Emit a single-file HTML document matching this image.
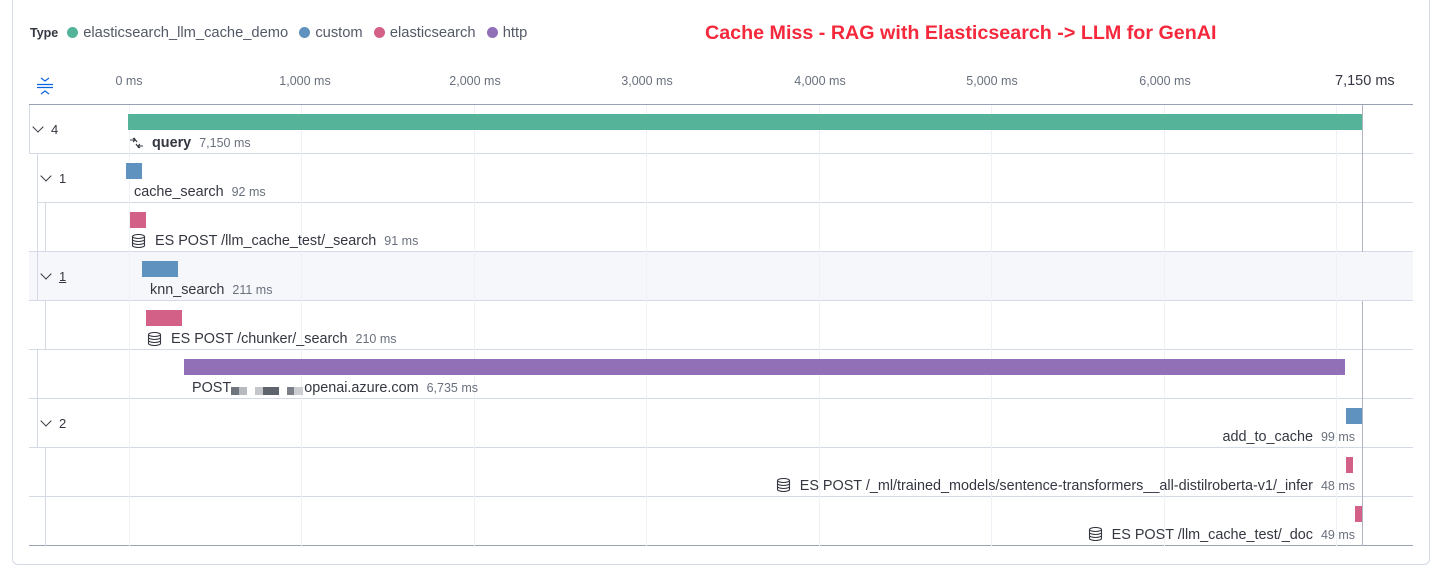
<!DOCTYPE html>
<html><head><meta charset="utf-8"><style>
*{margin:0;padding:0;box-sizing:border-box}
body{width:1440px;height:568px;background:#fff;font-family:"Liberation Sans",sans-serif;color:#343741;position:relative;overflow:hidden}
.abs{position:absolute}
.panel{left:12px;top:-10px;width:1418px;height:575px;border:1px solid #d3dae6;border-radius:6px}
.leg{top:25px;font-size:14.7px;color:#535966;white-space:nowrap}
.dot{display:inline-block;width:11px;height:11px;border-radius:50%;vertical-align:-1px;margin-right:5px;margin-left:3px}
.tick{top:74px;font-size:12.5px;color:#69707d;transform:translateX(-50%);white-space:nowrap}
.grid{top:105px;width:1px;height:441px;background:#eef1f6}
.row{height:49px;border-bottom:1px solid #d3dae6;right:27px}
.bar{height:16px}
.lbl{font-size:14.4px;white-space:nowrap;color:#343741}
.lbl small{font-size:12.5px;color:#69707d;margin-left:8px}
.tog{font-size:13px;color:#343741}
.chev{display:inline-block;width:8px;height:8px;border-right:1.5px solid #343741;border-bottom:1.5px solid #343741;transform:rotate(45deg);margin-right:9px;position:relative;top:-3px}
</style></head><body>
<div class="abs panel"></div>
<div class="abs leg" style="left:30px"><b style="color:#343741;font-size:12.5px;margin-right:6px">Type</b><span class="dot" style="background:#54b399"></span>elasticsearch_llm_cache_demo&nbsp; <span class="dot" style="background:#6092c0"></span>custom&nbsp; <span class="dot" style="background:#d36086"></span>elasticsearch&nbsp; <span class="dot" style="background:#9170b8"></span>http</div>
<div class="abs" style="left:705px;top:22px;font-size:19.7px;font-weight:bold;color:#f5283c;white-space:nowrap">Cache Miss - RAG with Elasticsearch -&gt; LLM for GenAI</div>

<svg class="abs" style="left:36px;top:76px" width="18" height="20" viewBox="0 0 18 20"><path d="M5 2l4 3 4-3M1 8.5h16M1 11.5h16M5 18l4-3 4 3" fill="none" stroke="#0b64dd" stroke-width="1.2"/></svg>
<div class="abs tick" style="left:129px">0 ms</div>
<div class="abs tick" style="left:305px">1,000 ms</div>
<div class="abs tick" style="left:475px">2,000 ms</div>
<div class="abs tick" style="left:647px">3,000 ms</div>
<div class="abs tick" style="left:820px">4,000 ms</div>
<div class="abs tick" style="left:992px">5,000 ms</div>
<div class="abs tick" style="left:1165px">6,000 ms</div>
<div class="abs" style="left:1335px;top:73px;font-size:14.5px;color:#343741">7,150 ms</div>

<div class="abs" style="left:29px;top:104px;width:1384px;height:1px;background:#98a2b3"></div>
<div class="abs row" style="left:29px;top:105px;width:1384px;border-left:1px solid #d3dae6"></div>
<div class="abs row" style="left:37px;top:154px;width:1376px;border-left:1px solid #d3dae6"></div>
<div class="abs row" style="left:29px;top:203px;width:1384px"></div>
<div class="abs" style="left:45px;top:203px;width:1px;height:49px;background:#d3dae6"></div>
<div class="abs" style="left:37px;top:203px;width:1px;height:49px;background:#d3dae6"></div>
<div class="abs row" style="left:29px;top:252px;width:1384px;background:#f5f7fa"></div>
<div class="abs" style="left:37px;top:252px;width:1px;height:49px;background:#d3dae6"></div>
<div class="abs row" style="left:29px;top:301px;width:1384px"></div>
<div class="abs" style="left:45px;top:301px;width:1px;height:49px;background:#d3dae6"></div>
<div class="abs row" style="left:29px;top:350px;width:1384px"></div>
<div class="abs" style="left:37px;top:350px;width:1px;height:49px;background:#d3dae6"></div>
<div class="abs row" style="left:29px;top:399px;width:1384px"></div>
<div class="abs" style="left:37px;top:399px;width:1px;height:49px;background:#d3dae6"></div>
<div class="abs row" style="left:29px;top:448px;width:1384px"></div>
<div class="abs" style="left:45px;top:448px;width:1px;height:49px;background:#d3dae6"></div>
<div class="abs row" style="left:29px;top:497px;width:1384px;border-bottom-color:#98a2b3"></div>
<div class="abs" style="left:45px;top:497px;width:1px;height:49px;background:#d3dae6"></div>

<div class="abs grid" style="left:129px"></div>
<div class="abs grid" style="left:301px"></div>
<div class="abs grid" style="left:474px"></div>
<div class="abs grid" style="left:646px"></div>
<div class="abs grid" style="left:819px"></div>
<div class="abs grid" style="left:991px"></div>
<div class="abs grid" style="left:1164px"></div>
<div class="abs grid" style="left:1336px"></div>
<div class="abs" style="left:1362px;top:105px;width:1px;height:147px;background:#b0b6c0"></div>
<div class="abs" style="left:1362px;top:301px;width:1px;height:245px;background:#b0b6c0"></div>

<div class="abs tog" style="left:34px;top:122px"><span class="chev"></span>4</div>
<div class="abs tog" style="left:42px;top:171px"><span class="chev"></span>1</div>
<div class="abs tog" style="left:42px;top:269px"><span class="chev"></span><u>1</u></div>
<div class="abs tog" style="left:42px;top:416px"><span class="chev"></span>2</div>

<div class="abs bar" style="left:128px;top:114px;width:1234px;background:#54b399"></div>
<div class="abs bar" style="left:126px;top:163px;width:16px;background:#6092c0"></div>
<div class="abs bar" style="left:130px;top:212px;width:16px;background:#d36086"></div>
<div class="abs bar" style="left:142px;top:261px;width:36px;background:#6092c0"></div>
<div class="abs bar" style="left:146px;top:310px;width:36px;background:#d36086"></div>
<div class="abs bar" style="left:184px;top:359px;width:1161px;background:#9170b8"></div>
<div class="abs bar" style="left:1346px;top:408px;width:16px;background:#6092c0"></div>
<div class="abs bar" style="left:1346px;top:457px;width:7px;background:#d36086"></div>
<div class="abs bar" style="left:1355px;top:506px;width:7px;background:#d36086"></div>

<svg class="abs" style="left:129px;top:137px" width="15" height="13" viewBox="0 0 15 13"><path d="M1 3h5M4 1l2 2-2 2M5 1l3 4M14 9H9M11 7l-2 2 2 2M10 11l-3-4" fill="none" stroke="#343741" stroke-width="1.1"/></svg>
<div class="abs lbl" style="left:152px;top:135px"><b>query</b><small>7,150 ms</small></div>
<div class="abs lbl" style="left:134px;top:184px">cache_search<small>92 ms</small></div>
<svg class="abs" style="left:131px;top:234px" width="15" height="14" viewBox="0 0 15 14"><g fill="none" stroke="#343741" stroke-width="1.1"><ellipse cx="7.5" cy="2.5" rx="6" ry="2"/><path d="M1.5 2.5v9c0 1.1 2.7 2 6 2s6-.9 6-2v-9M1.5 5.5c0 1.1 2.7 2 6 2s6-.9 6-2M1.5 8.5c0 1.1 2.7 2 6 2s6-.9 6-2"/></g></svg>
<div class="abs lbl" style="left:155px;top:233px">ES POST /llm_cache_test/_search<small>91 ms</small></div>
<div class="abs lbl" style="left:150px;top:282px">knn_search<small>211 ms</small></div>
<svg class="abs" style="left:147px;top:332px" width="15" height="14" viewBox="0 0 15 14"><g fill="none" stroke="#343741" stroke-width="1.1"><ellipse cx="7.5" cy="2.5" rx="6" ry="2"/><path d="M1.5 2.5v9c0 1.1 2.7 2 6 2s6-.9 6-2v-9M1.5 5.5c0 1.1 2.7 2 6 2s6-.9 6-2M1.5 8.5c0 1.1 2.7 2 6 2s6-.9 6-2"/></g></svg>
<div class="abs lbl" style="left:171px;top:331px">ES POST /chunker/_search<small>210 ms</small></div>
<div class="abs lbl" style="left:192px;top:380px">POST<span style="display:inline-block;width:73px;height:8px;vertical-align:-3px;background:linear-gradient(90deg,#6f747d 0 8px,#b7bac0 8px 16px,transparent 16px 24px,#c4c6cb 24px 32px,#5e636c 32px 48px,transparent 48px 56px,#7a7f88 56px 63px,#ccced2 63px 72px,transparent 72px)"></span>openai.azure.com<small>6,735 ms</small></div>
<div class="abs lbl" style="right:85px;top:429px">add_to_cache<small>99 ms</small></div>
<div class="abs lbl" style="right:85px;top:478px"><svg width="15" height="14" viewBox="0 0 15 14" style="vertical-align:-2px;margin-right:9px"><g fill="none" stroke="#343741" stroke-width="1.1"><ellipse cx="7.5" cy="2.5" rx="6" ry="2"/><path d="M1.5 2.5v9c0 1.1 2.7 2 6 2s6-.9 6-2v-9M1.5 5.5c0 1.1 2.7 2 6 2s6-.9 6-2M1.5 8.5c0 1.1 2.7 2 6 2s6-.9 6-2"/></g></svg>ES POST /_ml/trained_models/sentence-transformers__all-distilroberta-v1/_infer<small>48 ms</small></div>
<div class="abs lbl" style="right:85px;top:527px"><svg width="15" height="14" viewBox="0 0 15 14" style="vertical-align:-2px;margin-right:9px"><g fill="none" stroke="#343741" stroke-width="1.1"><ellipse cx="7.5" cy="2.5" rx="6" ry="2"/><path d="M1.5 2.5v9c0 1.1 2.7 2 6 2s6-.9 6-2v-9M1.5 5.5c0 1.1 2.7 2 6 2s6-.9 6-2M1.5 8.5c0 1.1 2.7 2 6 2s6-.9 6-2"/></g></svg>ES POST /llm_cache_test/_doc<small>49 ms</small></div>
</body></html>
